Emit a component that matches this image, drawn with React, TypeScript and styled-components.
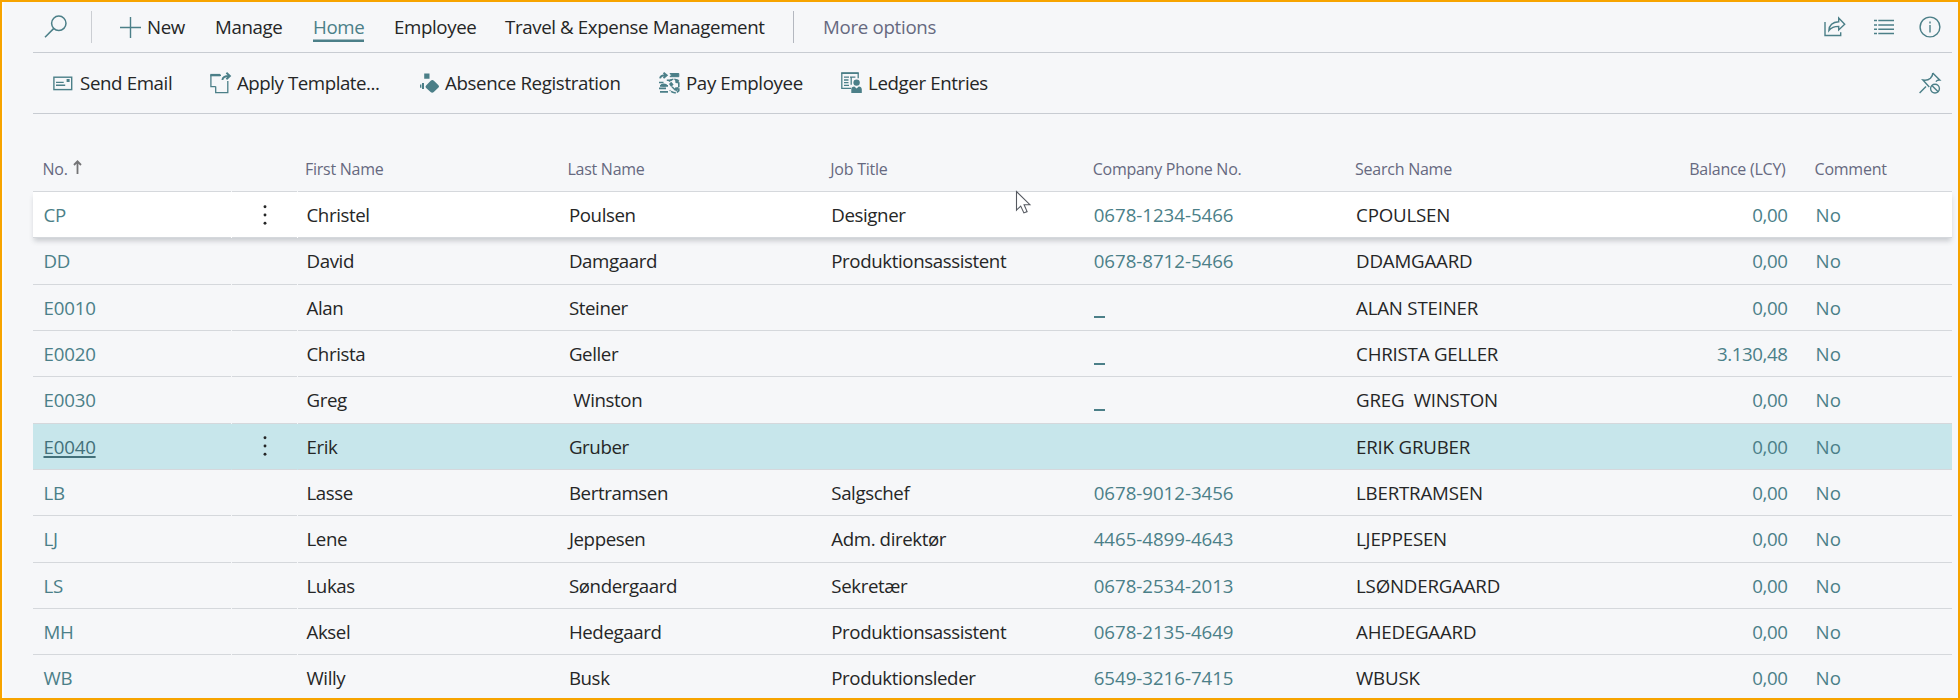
import React from "react";
import styled, { createGlobalStyle, css } from "styled-components";

const teal = "#4b7f88";
const ink = "#252626";
const slate = "#666980";
const rule = "#d5d8dc";

const GlobalStyle = createGlobalStyle`
  * { box-sizing: border-box; }
  body { margin: 0; background: #f6f7f9; }
`;

const Frame = styled.main`
  position: relative;
  width: 1960px;
  height: 700px;
  overflow: hidden;
  padding: 0 6px 0 31px;
  border: 2px solid #f7a400;
  background: #f6f7f9;
  box-shadow: inset 2px 0 0 #fcfcfd;
  font-family: "Open Sans", "Noto Sans", sans-serif;
  font-size: 18.7px;
  color: ${ink};
`;

const Bar = styled.nav<{ $height: number }>`
  display: flex;
  align-items: center;
  height: ${(p) => p.$height}px;
  border-bottom: 1px solid #c8ccd2;
`;

const IconSlot = styled.span<{ $width: number; $left?: number }>`
  display: flex;
  flex: none;
  width: ${(p) => p.$width}px;
  margin-left: ${(p) => p.$left ?? 0}px;
  svg { display: block; overflow: visible; }
`;

const Divider = styled.span<{ $left?: number; $right: number; $strong?: boolean }>`
  flex: none;
  width: 1px;
  height: 32px;
  margin-left: ${(p) => p.$left ?? 0}px;
  margin-right: ${(p) => p.$right}px;
  background: ${(p) => (p.$strong ? "#b4b8c0" : "#cbced3")};
`;

const MenuLabel = styled.span<{ $width: number; $track?: number; $muted?: boolean }>`
  flex: none;
  width: ${(p) => p.$width}px;
  line-height: 26px;
  white-space: nowrap;
  letter-spacing: ${(p) => p.$track ?? -0.37}px;
  color: ${(p) => (p.$muted ? slate : ink)};
`;

const ActiveLabel = styled.span`
  display: block;
  width: 51px;
  height: 28px;
  margin-bottom: -2px;
  color: ${teal};
  box-shadow: inset 0 -2.5px 0 ${teal};
`;

const Spacer = styled.span`
  flex: 1;
`;

const Grid = styled.section`
  display: flex;
  flex-direction: column;
  padding-top: 40px;
`;

const columns = "199px 66px 262.4px 262.4px 262.4px 262.4px 322px 116px 1fr";

const HeaderRow = styled.div`
  display: grid;
  grid-template-columns: ${columns};
  flex: none;
  height: 38px;
`;

const Row = styled.div<{ $state?: "hover" | "selected" }>`
  display: grid;
  grid-template-columns: ${columns};
  flex: none;
  height: 46.33px;
  ${(p) =>
    p.$state === "hover" &&
    css`
      position: relative;
      background: #fff;
      box-shadow: 0 4px 5px -1px rgba(60, 66, 80, 0.24);
    `}
  ${(p) => p.$state === "selected" && css`background: #c7e6eb;`}
`;

const Cell = styled.div<{ $link?: boolean; $track?: number; $pad?: number; $end?: boolean; $gap?: boolean }>`
  display: flex;
  align-items: center;
  justify-content: ${(p) => (p.$end ? "flex-end" : "flex-start")};
  min-width: 0;
  padding-left: ${(p) => p.$pad ?? 8.5}px;
  margin-right: ${(p) => (p.$gap ? 1 : 0)}px;
  border-bottom: 1px solid ${rule};
  white-space: pre;
  letter-spacing: ${(p) => p.$track ?? -0.4}px;
  color: ${(p) => (p.$link ? teal : ink)};
`;

const HeadCell = styled(Cell)`
  padding-top: 4px;
  font-size: 16px;
  letter-spacing: ${(p) => p.$track ?? -0.25}px;
  color: ${slate};
  line-height: 22px;
  align-items: flex-start;
`;

const Amount = styled(Cell)`
  margin-right: -2px;
`;

const Code = styled.span<{ $active?: boolean }>`
  ${(p) =>
    p.$active &&
    css`
      color: #43717a;
      text-decoration: underline;
      text-decoration-thickness: 1.5px;
      text-underline-offset: 2px;
    `}
`;

const Blank = styled.span`
  width: 11px;
  height: 2px;
  margin-top: 20px;
  background: ${teal};
`;

const Pointer = styled.svg`
  position: absolute;
  left: 1013px;
  top: 188px;
`;

const Search = () => (
  <svg width="24" height="24" viewBox="0 0 24 24" fill="none" stroke={teal} strokeWidth="1.5">
    <circle cx="14.8" cy="8.3" r="7.2" />
    <path d="M9.6 13.6 1 22.2" />
  </svg>
);

const Plus = () => (
  <svg width="21" height="21" viewBox="0 0 21 21" stroke={teal} strokeWidth="1.4">
    <path d="M10.5 0v21M0 10.5h21" />
  </svg>
);

const Share = () => (
  <svg width="22" height="20" viewBox="0 0 22 20" fill="none" stroke={teal} strokeWidth="1.4">
    <path d="M1 5v13.5h15.7v-3.2" />
    <path d="M4.9 13.5C5.2 7.9 8.7 5.2 14.7 4.8V1l6 6.2-6 5.7V9.4c-4.4 0-7.4 1-9.8 4.1Z" />
  </svg>
);

const List = () => (
  <svg width="20" height="16" viewBox="0 0 20 16" stroke={teal} strokeWidth="1.5">
    <path d="M0 1.5h3M0 6h3M0 10.2h3M0 14.5h3M4.3 1.5H20M4.3 6H20M4.3 10.2H20M4.3 14.5H20" />
  </svg>
);

const Info = () => (
  <svg width="22" height="22" viewBox="0 0 22 22" fill="none" stroke={teal} strokeWidth="1.4">
    <circle cx="11" cy="11" r="9.9" />
    <path d="M11 9v7.4M11 5.4v2" />
  </svg>
);

const Mail = () => (
  <svg width="20" height="15" viewBox="0 0 20 15" fill="none" stroke={teal} strokeWidth="1.4">
    <rect x="0.9" y="1.2" width="17.8" height="12.4" />
    <path d="M3 6.4h7.7M3 9.2h9.2" />
    <rect x="13.6" y="3" width="3" height="3" fill={teal} stroke="none" />
  </svg>
);

const Template = () => (
  <svg width="22" height="22" viewBox="0 0 22 22" fill="none" stroke={teal} strokeWidth="1.3">
    <path d="M11 3.4H.9v11.3h4.8M5.7 14.5v6.2h12.1V9" />
    <path d="M.3 3.1h10" strokeWidth="2.4" />
    <path d="M12.4 8c.2-3 2-4 6.8-4M16.4.8l3.5 3.3-3.5 3.2" strokeWidth="1.9" />
  </svg>
);

const Absence = () => (
  <svg width="20" height="20" viewBox="0 0 20 20" fill={teal}>
    <path d="M4.2.6h5.3v5.1H4.2zM6.1 12.4l4.6-4.6q1.6-1.5 3.2 0l4.6 4.4q1.1 1.2 0 2.4l-4.7 4.4q-1.6 1.3-3.2 0L6.1 15q-1.3-1.3 0-2.6z" />
    <path d="M0 11.6h1.4v3.2H0zM2 9.9h2v6.2H2z" />
  </svg>
);

const Pay = () => (
  <svg width="22" height="22" viewBox="0 0 22 22" fill="none" stroke={teal}>
    <path d="M1.1 6.3c.3-2.6 2-3 5.5-3M4.5.7l3.2 2.6-3.2 2.8" strokeWidth="1.9" />
    <path d="M11 1.5h8.8v3.2H11l1.5-1.6z" fill={teal} strokeWidth="1" />
    <path d="M0 10.5h4.5M1 13.9h8M0 16.4h7M1 19.9h8" strokeWidth="1.6" />
    <ellipse cx="4.8" cy="13.1" rx="3.2" ry="1.7" fill={teal} stroke="none" />
    <path d="M10.1 9.6c2-3.2 7.2-3.2 9.7-.2v9.4c-2.2 2.8-6.8 2.4-9-.6" strokeWidth="1.6" strokeDasharray="5 1" />
    <path d="m10 12 2.2-2.2 2.4 2.6-2.4 2.5zm6.1-4 3.2-.5.6 3.9-3.4-.3zm0 7.5 3.6-.6-1.4 4.4-3-1.1z" fill={teal} stroke="none" />
    <path d="M7.8 8.2h5M13 14.7l3 3" strokeWidth="1.5" />
  </svg>
);

const Ledger = () => (
  <svg width="22" height="22" viewBox="0 0 22 22" fill="none" stroke={teal} strokeWidth="1.3">
    <path d="M10.2 16.4H.8V1.3h16.4v5" />
    <path d="M.2 1.1h17.5" strokeWidth="1.8" />
    <path d="M3 5.2h5M3 8h4.5M3 10.7h4.5M3 13.4h5M9 5.2h5.4M10.2 5.2v7.5" />
    <circle cx="15.6" cy="10.6" r="3.2" fill={teal} stroke="none" />
    <path d="M10.3 21v-3.6c0-2 1.2-3 3-3l2.3 2.1 2.2-2.1c1.8 0 3 1 3 3V21Z" fill={teal} stroke="none" />
  </svg>
);

const Unpin = () => (
  <svg width="22" height="22" viewBox="0 0 22 22" fill="none" stroke={teal} strokeWidth="1.4">
    <path d="M.6 21.1 7 14.6M13.7 1l7 7c-1.6-.1-2.9.4-3.8 1.6M13.7 1c.3 2-.8 3.6-2.3 5.2-1.6 1.5-4.4 2.3-7.5 1.8l6.4 7" />
    <circle cx="16" cy="16.6" r="4.4" />
    <path d="m12.9 13.5 6.2 6.2" />
  </svg>
);

const SortUp = () => (
  <svg width="9" height="14" viewBox="0 0 9 14" fill="none" stroke="#747476" strokeWidth="1.8">
    <path d="M4.5 14V1.5M1 5l3.5-3.6L8 5" />
  </svg>
);

const SortMark = styled.span`
  display: flex;
  padding: 2px 0 0 1px;
`;

const Dots = () => (
  <svg width="4" height="20" viewBox="0 0 4 20" fill={ink}>
    <circle cx="2" cy="1.8" r="1.45" />
    <circle cx="2" cy="10" r="1.45" />
    <circle cx="2" cy="18.2" r="1.45" />
  </svg>
);

type Employee = {
  no: string;
  first: string;
  last: string;
  title?: string;
  phone?: string;
  search: string;
  balance?: string;
  state?: "hover" | "selected";
};

const employees: Employee[] = [
  { no: "CP", first: "Christel", last: "Poulsen", title: "Designer", phone: "0678-1234-5466", search: "CPOULSEN", state: "hover" },
  { no: "DD", first: "David", last: "Damgaard", title: "Produktionsassistent", phone: "0678-8712-5466", search: "DDAMGAARD" },
  { no: "E0010", first: "Alan", last: "Steiner", phone: "_", search: "ALAN STEINER" },
  { no: "E0020", first: "Christa", last: "Geller", phone: "_", search: "CHRISTA GELLER", balance: "3.130,48" },
  { no: "E0030", first: "Greg", last: " Winston", phone: "_", search: "GREG  WINSTON" },
  { no: "E0040", first: "Erik", last: "Gruber", search: "ERIK GRUBER", state: "selected" },
  { no: "LB", first: "Lasse", last: "Bertramsen", title: "Salgschef", phone: "0678-9012-3456", search: "LBERTRAMSEN" },
  { no: "LJ", first: "Lene", last: "Jeppesen", title: "Adm. direktør", phone: "4465-4899-4643", search: "LJEPPESEN" },
  { no: "LS", first: "Lukas", last: "Søndergaard", title: "Sekretær", phone: "0678-2534-2013", search: "LSØNDERGAARD" },
  { no: "MH", first: "Aksel", last: "Hedegaard", title: "Produktionsassistent", phone: "0678-2135-4649", search: "AHEDEGAARD" },
  { no: "WB", first: "Willy", last: "Busk", title: "Produktionsleder", phone: "6549-3216-7415", search: "WBUSK" },
];

export default function App() {
  return (
    <Frame>
      <GlobalStyle />
      <Bar $height={51}>
        <IconSlot $left={11} $width={47}><Search /></IconSlot>
        <Divider $right={28} />
        <IconSlot $width={27}><Plus /></IconSlot>
        <MenuLabel $width={68}>New</MenuLabel>
        <MenuLabel $width={98}>Manage</MenuLabel>
        <MenuLabel $width={81}><ActiveLabel>Home</ActiveLabel></MenuLabel>
        <MenuLabel $width={111}>Employee</MenuLabel>
        <MenuLabel $width={288}>Travel &amp; Expense Management</MenuLabel>
        <Divider $strong $right={29} />
        <MenuLabel $width={130} $muted $track={-0.3}>More options</MenuLabel>
        <Spacer />
        <IconSlot $width={50}><Share /></IconSlot>
        <IconSlot $width={45}><List /></IconSlot>
        <IconSlot $width={33}><Info /></IconSlot>
      </Bar>
      <Bar $height={61}>
        <IconSlot $left={20} $width={27}><Mail /></IconSlot>
        <MenuLabel $width={130}>Send Email</MenuLabel>
        <IconSlot $width={27}><Template /></IconSlot>
        <MenuLabel $width={183} $track={-0.45}>Apply Template...</MenuLabel>
        <IconSlot $width={25}><Absence /></IconSlot>
        <MenuLabel $width={214}>Absence Registration</MenuLabel>
        <IconSlot $width={27}><Pay /></IconSlot>
        <MenuLabel $width={155}>Pay Employee</MenuLabel>
        <IconSlot $width={27}><Ledger /></IconSlot>
        <MenuLabel $width={130}>Ledger Entries</MenuLabel>
        <Spacer />
        <IconSlot $width={33}><Unpin /></IconSlot>
      </Bar>
      <Grid>
        <HeaderRow>
          <HeadCell $pad={9.5} $gap>No. <SortMark><SortUp /></SortMark></HeadCell>
          <HeadCell $gap />
          <HeadCell $pad={7}>First Name</HeadCell>
          <HeadCell $pad={7}>Last Name</HeadCell>
          <HeadCell $pad={7.5}>Job Title</HeadCell>
          <HeadCell $pad={7.5}>Company Phone No.</HeadCell>
          <HeadCell $pad={7.5}>Search Name</HeadCell>
          <HeadCell $end>Balance (LCY)</HeadCell>
          <HeadCell $pad={29}>Comment</HeadCell>
        </HeaderRow>
        {employees.map((e) => (
          <Row key={e.no} $state={e.state}>
            <Cell $link $pad={10.5} $track={-0.2} $gap>
              <Code $active={e.state === "selected"}>{e.no}</Code>
            </Cell>
            <Cell $pad={31} $gap>{e.state && <Dots />}</Cell>
            <Cell>{e.first}</Cell>
            <Cell>{e.last}</Cell>
            <Cell>{e.title}</Cell>
            <Cell $link $track={-0.03}>{e.phone === "_" ? <Blank /> : e.phone}</Cell>
            <Cell $track={-0.2}>{e.search}</Cell>
            <Amount $link $end $track={-0.4}>{e.balance ?? "0,00"}</Amount>
            <Cell $link $pad={30} $track={0}>No</Cell>
          </Row>
        ))}
      </Grid>
      <Pointer width="18" height="26" viewBox="0 0 18 26">
        <path d="M1.5 1.5v18.6l4.2-4 3.2 6.8 3.2-1.3-3-6.9h5.8Z" fill="#fff" stroke="#555960" strokeWidth="1.1" />
      </Pointer>
    </Frame>
  );
}
